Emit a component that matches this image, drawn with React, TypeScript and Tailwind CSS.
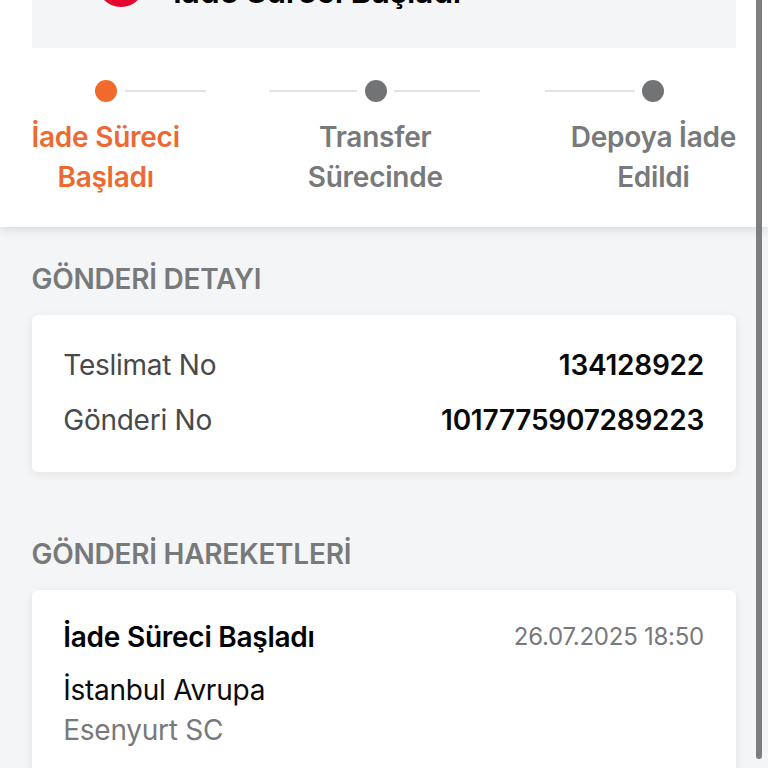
const track = "h-[2px] bg-[#e3e3e4]";
const dot = "h-[22px] w-[22px] shrink-0 rounded-full";
const cardShadow = "shadow-[0_2px_10px_rgba(0,0,0,0.08)]";

function DetailRow({ label, value }: { label: string; value: string }) {
  return (
    <div className="flex h-[55px] items-start justify-between">
      <span className="text-[#48494b]">{label}</span>
      <span className="font-semibold text-[#0a0a0a]">{value}</span>
    </div>
  );
}

export default function App() {
  return (
    <div className="relative h-[768px] w-[768px] overflow-hidden bg-[#f4f5f7] font-['Inter','Liberation_Sans',sans-serif] text-[28px] leading-[39.6px] tracking-[-0.25px]">
      <header className="h-[227px] bg-white px-8 shadow-[0_2px_10px_rgba(0,0,0,0.13)]">
        <div className="flex h-12 items-start bg-[#f4f5f7] pl-[65px]">
          <span className="-mt-[41px] h-12 w-12 shrink-0 rounded-full bg-[#e4062f]" />
          <h1 className="-mt-[30px] ml-7 text-[32px] leading-[44px] font-semibold text-black">
            İade Süreci Başladı
          </h1>
        </div>
        <div className="mt-[32px] flex h-[22px] items-center">
          <span className={`${dot} ml-[63px] bg-[#f26a2b]`} />
          <span className={`${track} ml-2 w-[81px]`} />
          <span className={`${track} ml-[63px] w-[88px]`} />
          <span className={`${dot} ml-2 bg-[#717375]`} />
          <span className={`${track} ml-[7px] w-[86px]`} />
          <span className={`${track} ml-[65px] w-[90px]`} />
          <span className={`${dot} ml-[7px] bg-[#717375]`} />
        </div>
        <div className="-ml-[0.5px] mt-[16px] flex justify-between text-center font-semibold text-[#77797b]">
          <span className="text-[#ec6a32]">İade Süreci<br />Başladı</span>
          <span>Transfer<br />Sürecinde</span>
          <span>Depoya İade<br />Edildi</span>
        </div>
      </header>

      <main className="px-8">
        <h2 className="-ml-[0.5px] mt-[33px] h-[55px] font-semibold text-[#77797b]">GÖNDERİ DETAYI</h2>
        <section className={`h-[157px] rounded-[6px] bg-white pr-8 pl-[31.25px] pt-[31px] ${cardShadow}`}>
          <DetailRow label="Teslimat No" value="134128922" />
          <DetailRow label="Gönderi No" value="1017775907289223" />
        </section>

        <h2 className="-ml-[0.5px] mt-[63px] h-[55px] font-semibold text-[#77797b]">GÖNDERİ HAREKETLERİ</h2>
        <section className={`h-[240px] rounded-[6px] bg-white pr-8 pl-[31.25px] pt-[28px] ${cardShadow}`}>
          <div className="flex h-[53px] items-start justify-between">
            <h3 className="font-semibold text-black">İade Süreci Başladı</h3>
            <time className="-mt-px text-[24px] text-[#77797b]">26.07.2025 18:50</time>
          </div>
          <p className="text-[#0a0a0a]">İstanbul Avrupa</p>
          <p className="text-[#77797b]">Esenyurt SC</p>
        </section>
      </main>

      {/* Overlay scrollbar thumb */}
      <div className="absolute -top-2 left-[756px] h-[767px] w-[6px] rounded-full bg-[#7d7e80]" />
    </div>
  );
}
